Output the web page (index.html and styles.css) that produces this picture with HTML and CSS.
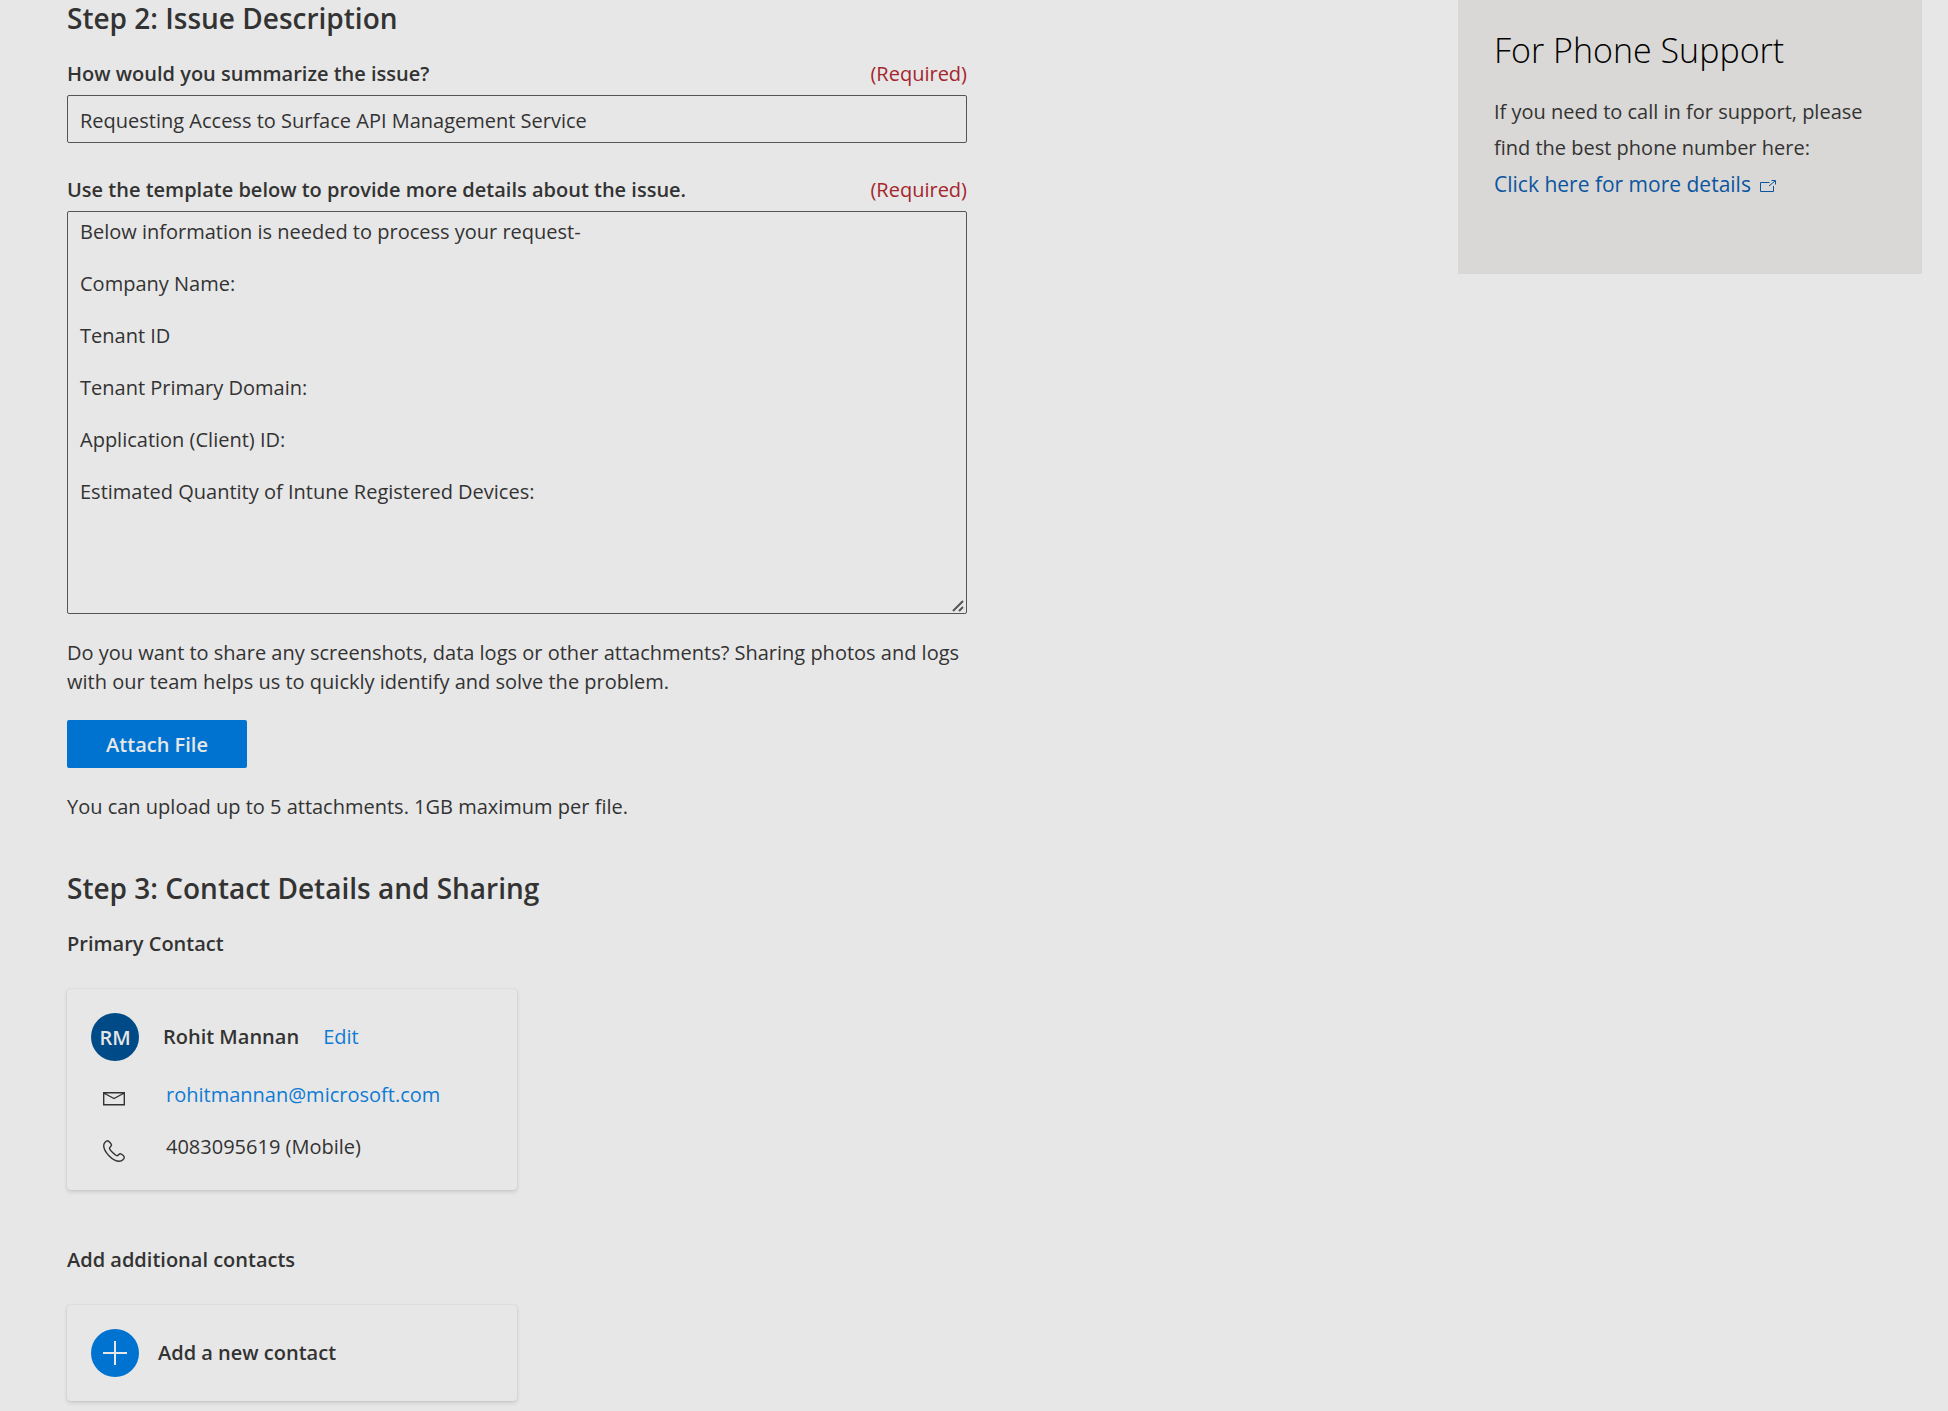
FILE: index.html
```html
<!DOCTYPE html>
<html lang="en">
<head>
<meta charset="utf-8">
<title>New support request</title>
<meta name="viewport" content="width=device-width, initial-scale=1">
<link rel="stylesheet" href="styles.css">
</head>
<body>
<div class="page">
  <main class="form">
    <section>
      <h2 class="step-title">Step 2: Issue Description</h2>
      <div class="field">
        <div class="field-head">
          <label class="label" for="summary">How would you summarize the issue?</label>
          <span class="required">(Required)</span>
        </div>
        <input class="text-input" id="summary" type="text" value="Requesting Access to Surface API Management Service" required>
      </div>
      <div class="field">
        <div class="field-head">
          <label class="label" for="details">Use the template below to provide more details about the issue.</label>
          <span class="required">(Required)</span>
        </div>
        <textarea class="text-area" id="details" required>Below information is needed to process your request-

Company Name:

Tenant ID

Tenant Primary Domain:

Application (Client) ID:

Estimated Quantity of Intune Registered Devices:</textarea>
      </div>
      <div class="attachments">
        <p class="copy">Do you want to share any screenshots, data logs or other attachments? Sharing photos and logs with our team helps us to quickly identify and solve the problem.</p>
        <button class="button" type="button">Attach File</button>
        <p class="copy">You can upload up to 5 attachments. 1GB maximum per file.</p>
      </div>
    </section>

    <section class="step">
      <h2 class="step-title">Step 3: Contact Details and Sharing</h2>
      <h3 class="label">Primary Contact</h3>
      <div class="card contact-card">
        <div class="person">
          <span class="circle avatar">RM</span>
          <span class="person-name">Rohit Mannan</span>
          <a class="link" href="#edit">Edit</a>
        </div>
        <div class="detail">
          <svg class="detail-icon" viewBox="0 0 22 22" aria-hidden="true"><path d="M.7 4.7h20.6v12H.7zM.7 5l10.3 5.500L21.300 5"/></svg>
          <a class="link" href="mailto:rohitmannan@microsoft.com">rohitmannan@microsoft.com</a>
        </div>
        <div class="detail">
          <svg class="detail-icon" viewBox="0 0 22 22" aria-hidden="true"><path d="M4.600.8C3.600.8.7 2.700.7 5.600c0 6.200 8.800 15.700 15.600 15.700 3 0 5-2.700 5-4 0-1.200-3-3.600-4-3.600-1.300 0-2.100 2-3.300 2-1.600 0-7.500-5.800-7.500-7.400 0-1.100 2-1.900 2-3.200C8.500 4 5.700.8 4.600.8z"/></svg>
          <span>4083095619 (Mobile)</span>
        </div>
      </div>
      <h3 class="label label-next">Add additional contacts</h3>
      <button class="card add-card" type="button">
        <span class="circle add-circle">
          <svg class="plus" viewBox="0 0 24 24" aria-hidden="true"><path d="M12 0v24M0 12h24"/></svg>
        </span>
        Add a new contact
      </button>
    </section>
  </main>

  <aside class="support">
    <h2 class="support-title">For Phone Support</h2>
    <p class="support-copy">If you need to call in for support, please find the best phone number here:</p>
    <a class="support-link" href="#phone-numbers">Click here for more details
      <svg class="external" viewBox="0 0 16 12" aria-hidden="true"><path d="M9.500 2.500h-9v9h13V6M9 6l6-5M11.500.5h4v4"/></svg></a>
  </aside>
</div>
</body>
</html>
```
FILE: styles.css
```css
:root {
  --ink: #333;
  --line: #555;
  --blue: #0072cf;
  --page: #e7e7e7;
}

* {
  box-sizing: border-box;
}

body {
  margin: 0;
  background: var(--page);
  color: var(--ink);
  font: 400 20px/28px "Open Sans", "Segoe UI", sans-serif;
}

h2, h3, p {
  margin: 0;
}

a {
  text-decoration: none;
}

button, input, textarea {
  font: inherit;
  color: inherit;
}

.page {
  display: flex;
  justify-content: space-between;
  align-items: flex-start;
  gap: 48px;
  padding: 0 26px 8px 67px;
}

.form {
  flex: 0 1 900px;
  min-width: 0;
}

.step {
  margin-top: 49px;
}

.step-title {
  margin-bottom: 24px;
  font-size: 28px;
  line-height: 36px;
  font-weight: 600;
}

.field + .field {
  margin-top: 33px;
}

.field-head {
  display: flex;
  justify-content: space-between;
  margin-bottom: 7px;
}

.label {
  font-size: 20px;
  font-weight: 600;
}

.required {
  color: #a4262c;
}

.text-input,
.text-area {
  display: block;
  width: 100%;
  border: 1px solid var(--line);
  border-radius: 2px;
  background: transparent;
}

.text-input {
  height: 48px;
  padding: 2px 12px 0;
}

.text-area {
  height: 403px;
  padding: 7px 12px;
  line-height: 26px;
  resize: vertical;
}

.text-area::-webkit-resizer {
  background: url("data:image/svg+xml,%3Csvg xmlns='http://www.w3.org/2000/svg' viewBox='0 0 15 15'%3E%3Cpath d='M2 13L12 3M8 13l4-4' stroke='%23555' stroke-width='2'/%3E%3C/svg%3E") center / 100% no-repeat;
}

.attachments {
  display: flex;
  flex-direction: column;
  align-items: flex-start;
  gap: 24px;
  margin-top: 24px;
}

.copy {
  line-height: 29px;
}

.button {
  min-width: 180px;
  height: 48px;
  padding: 2px 24px 0;
  border: 0;
  border-radius: 2px;
  background: var(--blue);
  color: var(--page);
  font-weight: 600;
}

.card {
  width: 50%;
  margin-top: 31px;
  padding: 24px;
  border: 0;
  border-radius: 4px;
  background: var(--page);
  box-shadow: 0 2px 4px rgba(0, 0, 0, 0.12), 0 0 2px rgba(0, 0, 0, 0.1);
}

.contact-card {
  padding-bottom: 28px;
}

.person {
  display: flex;
  align-items: center;
  margin-bottom: 20px;
}

.circle {
  display: grid;
  place-items: center;
  flex: none;
  width: 48px;
  height: 48px;
  border-radius: 50%;
  color: var(--page);
}

.avatar {
  margin-right: 24px;
  padding-top: 2px;
  background: #004b87;
  font-weight: 600;
}

.person-name {
  margin-right: 24px;
  font-weight: 600;
}

.link {
  color: #0f7bd4;
}

.detail {
  display: flex;
  align-items: flex-start;
  gap: 41px;
  padding-left: 12px;
}

.detail + .detail {
  margin-top: 23px;
}

.detail-icon {
  flex: none;
  width: 22px;
  height: 22px;
  margin-top: 7px;
  fill: none;
  stroke: var(--ink);
  stroke-width: 1.4;
}

.label-next {
  margin-top: 56px;
}

.add-card {
  display: flex;
  align-items: center;
  gap: 19px;
  font-weight: 600;
}

.add-circle {
  background: var(--blue);
}

.plus {
  width: 24px;
  height: 24px;
  stroke: currentColor;
  stroke-width: 2;
}

.support {
  flex: 0 0 464px;
  min-height: 274px;
  padding: 26px 36px 64px;
  background: #d9d8d6;
}

.support-title {
  margin-bottom: 20px;
  color: #000;
  font-size: 34px;
  line-height: 48px;
  font-weight: 300;
}

.support-copy,
.support-link {
  line-height: 36px;
}

.support-link {
  color: #0b559f;
  font-size: 21px;
}

.external {
  width: 16px;
  height: 12px;
  margin-left: 4px;
  fill: none;
  stroke: currentColor;
  stroke-width: 1;
}
```
